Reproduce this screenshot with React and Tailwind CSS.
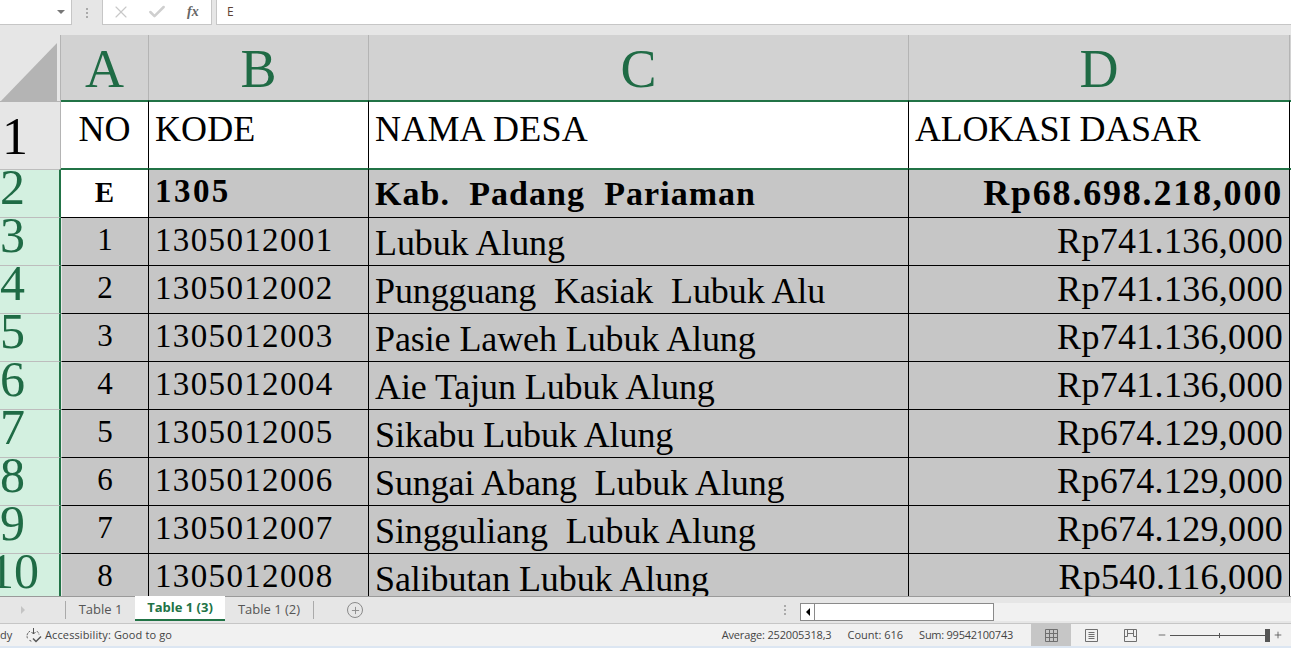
import React from 'react';
import { X, Check, Plus, Minus } from 'lucide-react';

const serif = "font-['Liberation_Serif',serif]";
const ui = "font-['Open_Sans',sans-serif]";

const rows = [
  ['1', '1305012001', 'Lubuk Alung', 'Rp741.136,000'],
  ['2', '1305012002', 'Pungguang  Kasiak  Lubuk Alu', 'Rp741.136,000'],
  ['3', '1305012003', 'Pasie Laweh Lubuk Alung', 'Rp741.136,000'],
  ['4', '1305012004', 'Aie Tajun Lubuk Alung', 'Rp741.136,000'],
  ['5', '1305012005', 'Sikabu Lubuk Alung', 'Rp674.129,000'],
  ['6', '1305012006', 'Sungai Abang  Lubuk Alung', 'Rp674.129,000'],
  ['7', '1305012007', 'Singguliang  Lubuk Alung', 'Rp674.129,000'],
  ['8', '1305012008', 'Salibutan Lubuk Alung', 'Rp540.116,000'],
];

const cols = 'grid grid-cols-[61px_88px_220px_540px_381px_1fr]';

function ColHead({ children }) {
  return (
    <div className="flex justify-center border-r border-[#b4b4b4] bg-[#d2d2d2] text-[54px] leading-[69px] text-[#1f6b45]">
      {children}
    </div>
  );
}

function RowHead({ n, first }) {
  return (
    <div
      className={`overflow-hidden border-r-2 border-b border-r-[#217346] border-b-[#bdbdbd] bg-[#d3f0e0] text-[50px] font-normal leading-[34px] text-[#1f6b45] ${
        first ? 'mt-px border-t border-t-[#bdbdbd]' : ''
      }`}
    >
      <div className={n === '10' ? '-ml-[11px]' : ''}>{n}</div>
    </div>
  );
}

function Row({ head, no, kode, nama, nilai }) {
  return (
    <div className={`${cols} h-12`}>
      <RowHead n={head} />
      <div className="flex justify-center border-l border-r border-b border-l-[#e8e8e8] border-r-black border-b-black bg-[#c6c6c6] pt-1 text-[31px] leading-[36px] text-black">{no}</div>
      <div className="border-r border-b border-black bg-[#c6c6c6] pl-1.5 pt-1 text-[33px] leading-[36px] tracking-[1.35px] text-black">{kode}</div>
      <div className="whitespace-pre border-r border-b border-black bg-[#c6c6c6] pl-1.5 pt-1.5 text-[36px] leading-[38px] tracking-[-0.1px] text-black">{nama}</div>
      <div className="border-r border-b border-black bg-[#c6c6c6] pr-1.5 pt-[3px] text-right text-[36px] leading-[40px] tracking-[0.3px] text-black">{nilai}</div>
      <div className="bg-white" />
    </div>
  );
}

function GridIcon() {
  return (
    <svg width="13" height="13" viewBox="0 0 13 13" fill="none" stroke="#6f6f6f">
      <path d="M.5.5h12v12H.5zM4.5.5v12M8.5.5v12M.5 4.5h12M.5 8.5h12" />
    </svg>
  );
}

function PageIcon() {
  return (
    <svg width="13" height="13" viewBox="0 0 13 13" fill="none" stroke="#6f6f6f">
      <path d="M.5.5h12v12H.5zM3.5 3.5h6M3.5 5.5h6M3.5 7.5h6M3.5 9.5h6" />
    </svg>
  );
}

function BreakIcon() {
  return (
    <svg width="13" height="13" viewBox="0 0 13 13" fill="none" stroke="#6f6f6f">
      <path d="M.5.5h12v12H.5zM.5 7.5h3V.5M12.5 7.5h-3V.5M3.5 4.5h6" />
    </svg>
  );
}

function AccessIcon() {
  return (
    <svg width="17" height="15" viewBox="0 0 17 15" fill="none" stroke="#555" strokeWidth="1">
      <path d="M5 3.2A5.5 5.5 0 0 0 2.6 10.5M12 3.2c1 .8 1.8 2 2 3.3M4.5 12.4c.8.5 1.6.8 2.5.9" strokeDasharray="2 1" />
      <path d="M8.5 0v6M6.5 4l2 2 2-2" />
      <path d="M8 10.5l3 3 5-5" strokeWidth="1.5" />
    </svg>
  );
}

function Grip() {
  return (
    <div className="flex flex-col gap-[2px]">
      <div className="size-[2px] bg-[#aaa]" />
      <div className="size-[2px] bg-[#aaa]" />
      <div className="size-[2px] bg-[#aaa]" />
    </div>
  );
}

export default function App() {
  return (
    <div className="flex h-[648px] w-[1291px] flex-col overflow-hidden bg-[#e6e6e6]">
      {/* formula bar */}
      <div className="flex h-[25px] shrink-0 bg-[#e6e6e6]">
        <div className="flex h-full w-[72px] items-center justify-end border-r border-b border-[#c6c6c6] bg-white pr-[6px]">
          <div className="h-0 w-0 border-x-[4px] border-t-[4px] border-x-transparent border-t-[#777]" />
        </div>
        <div className="flex w-[30px] items-center justify-center">
          <Grip />
        </div>
        <div className="flex h-full w-[110px] items-center border-x border-b border-[#c6c6c6] bg-white pl-[8px]">
          <X size={20} strokeWidth={1.4} className="text-[#c8c8c8]" />
          <Check size={20} strokeWidth={3} className="ml-[16px] text-[#cfcfcf]" />
          <span className={`${serif} ml-[20px] text-[14px] font-bold italic leading-none text-[#666]`}>fx</span>
        </div>
        <div className={`${ui} ml-[4px] flex h-full flex-1 items-center border-l border-b border-[#c6c6c6] bg-white pl-[10px] text-[12px] text-[#5c4033]`}>
          E
        </div>
      </div>

      <div className="h-[10px] shrink-0" />

      {/* sheet */}
      <div className={`${serif} h-[561px] shrink-0 overflow-hidden`}>
        <div className={`${cols} h-[65px]`}>
          <div className="flex items-end justify-end border-r border-[#b4b4b4] bg-[#e6e6e6] pb-[2px] pr-[3px]">
            <svg width="57" height="59" viewBox="0 0 57 59">
              <polygon points="57,0 57,59 0,59" fill="#b4b4b4" />
            </svg>
          </div>
          <ColHead>A</ColHead>
          <ColHead>B</ColHead>
          <ColHead>C</ColHead>
          <ColHead>D</ColHead>
          <div className="bg-[#d2d2d2]" />
        </div>

        <div className={`${cols} h-[68px]`}>
          <div className="mt-px border-t border-r border-[#b4b4b4] bg-[#e6e6e6] pl-0.5 pt-[3px] text-[52px] leading-[64px] text-black">1</div>
          <div className="flex justify-center border-t-2 border-r border-t-[#217346] border-r-black bg-white pt-[5px] text-[36px] leading-[44px] text-black">NO</div>
          <div className="border-t-2 border-r border-t-[#217346] border-r-black bg-white pl-1.5 pt-[5px] text-[36px] leading-[44px] tracking-[0.1px] text-black">KODE</div>
          <div className="border-t-2 border-r border-t-[#217346] border-r-black bg-white pl-1.5 pt-[5px] text-[36px] leading-[44px] tracking-[0.2px] text-black">NAMA DESA</div>
          <div className="border-t-2 border-r border-t-[#217346] border-r-black bg-white pl-1.5 pt-[5px] text-[36px] leading-[44px] tracking-[-0.3px] text-black">ALOKASI DASAR</div>
          <div className="border-t-2 border-t-[#217346] bg-white" />
        </div>

        {/* row 2, the selected one */}
        <div className={`${cols} h-[50px] font-bold`}>
          <RowHead n="2" first />
          <div className="flex justify-center border-t-2 border-r border-b border-t-[#217346] border-r-black border-b-black bg-white pt-1 text-[29px] leading-[36px] text-black">E</div>
          <div className="border-t-2 border-r border-b border-t-[#217346] border-r-black border-b-black bg-[#c6c6c6] pl-1.5 pt-[3px] text-[33px] leading-[36px] tracking-[2.45px] text-black">1305</div>
          <div className="whitespace-pre border-t-2 border-r border-b border-t-[#217346] border-r-black border-b-black bg-[#c6c6c6] pl-1.5 pt-[5px] text-[34px] leading-[38px] tracking-[1.05px] text-black">Kab.  Padang  Pariaman</div>
          <div className="border-t-2 border-r border-b border-t-[#217346] border-r-black border-b-black bg-[#c6c6c6] pr-1.5 pt-[3px] text-right text-[36px] leading-[40px] tracking-[1.8px] text-black">Rp68.698.218,000</div>
          <div className="border-t-2 border-t-[#217346] bg-white" />
        </div>

        {rows.map((r, i) => (
          <Row key={r[1]} head={String(i + 3)} no={r[0]} kode={r[1]} nama={r[2]} nilai={r[3]} />
        ))}
      </div>

      {/* tabs */}
      <div className={`${ui} flex h-[27px] shrink-0 border-t border-[#9a9a9a] bg-[#e6e6e6] text-[13px] text-[#555]`}>
        <div className="flex w-[65px] items-center justify-end pr-[40px]">
          <div className="h-0 w-0 border-y-[4px] border-l-[4px] border-y-transparent border-l-[#c4c4c4]" />
        </div>
        <div className="my-[4px] flex w-[70px] items-center justify-center border-l border-[#aaa]">Table 1</div>
        <div className="-mt-px mb-[2px] flex w-[90px] items-center justify-center border-b-2 border-[#217346] bg-white font-bold text-[#217346]">Table 1 (3)</div>
        <div className="my-[4px] flex w-[89px] items-center justify-center border-r border-[#aaa]">Table 1 (2)</div>
        <div className="ml-[33px] mt-[5px] flex size-4 items-center justify-center rounded-full border-[1.5px] border-[#8a8a8a]">
          <Plus size={11} strokeWidth={2} className="text-[#8a8a8a]" />
        </div>
        <div className="ml-[421px] flex items-center">
          <Grip />
        </div>
        <div className="ml-[14px] mt-[6px] mb-[2px] flex flex-1">
          <div className="flex w-[15px] items-center justify-center border border-[#8a8a8a] bg-white">
            <div className="h-0 w-0 border-y-[4px] border-r-[4px] border-y-transparent border-r-black" />
          </div>
          <div className="w-[179px] border border-l-0 border-[#8a8a8a] bg-white" />
          <div className="flex-1 bg-[#f1f1f1]" />
        </div>
      </div>

      {/* status bar */}
      <div className={`${ui} flex h-[23px] shrink-0 items-center border-t border-[#c6c6c6] bg-[#f1f1f1] text-[11px] text-[#444]`}>
        <span className="w-[25px] overflow-hidden text-left">dy</span>
        <AccessIcon />
        <span className="ml-[3px] tracking-[0.12px]">Accessibility: Good to go</span>
        <span className="ml-auto tracking-[-0.15px]">Average: 252005318,3</span>
        <span className="ml-[16px]">Count: 616</span>
        <span className="ml-[16px] tracking-[-0.25px]">Sum: 99542100743</span>
        <div className="ml-[18px] flex h-full w-10 items-center justify-center bg-[#c6c6c6]"><GridIcon /></div>
        <div className="ml-[14px] flex items-center"><PageIcon /></div>
        <div className="ml-[26px] flex items-center"><BreakIcon /></div>
        <Minus size={10} className="ml-[20px] text-[#555]" />
        <div className="relative ml-[3px] h-px w-[97px] bg-[#555]">
          <div className="absolute left-1/2 top-[-2px] h-[5px] w-px bg-[#555]" />
          <div className="absolute right-[-3px] top-[-6px] h-[13px] w-[5px] bg-[#555]" />
        </div>
        <Plus size={10} className="ml-[6px] mr-[8px] text-[#555]" />
      </div>

      <div className="h-[3px] shrink-0 bg-[#dce6f2]" />
    </div>
  );
}
